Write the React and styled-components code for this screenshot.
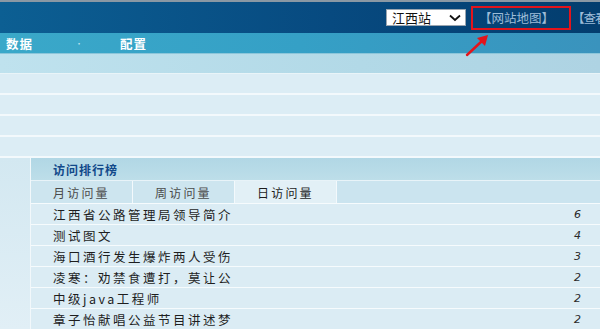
import React, { useState } from "react";
import styled, { createGlobalStyle } from "styled-components";

const GlobalStyle = createGlobalStyle`
  html, body {
    margin: 0;
    padding: 0;
    background: #fff;
  }
  body {
    font-family: "Noto Sans CJK SC", "Noto Sans", sans-serif;
    font-size: 12px;
  }
`;

const Page = styled.div`
  position: relative;
  width: 600px;
  height: 330px;
  overflow: hidden;
  background: #fff;
`;

const TopBar = styled.div`
  height: 31px;
  border-top: 2px solid #8a98a4;
  background: linear-gradient(90deg, #0c5f93 0%, #074a80 55%, #033d6e 100%);
  display: flex;
  align-items: center;
  justify-content: flex-end;
  white-space: nowrap;
  overflow: hidden;
`;

const SiteSelect = styled.div`
  width: 80px;
  height: 17px;
  margin-right: 5px;
  background: #fff;
  border: 1px solid #9aa5b0;
  box-sizing: border-box;
  display: flex;
  align-items: center;
  justify-content: space-between;
  padding: 0 4px 0 5px;
  font-size: 13px;
  color: #111;
  line-height: 1;
`;

const MapLink = styled.a`
  width: 100px;
  height: 24px;
  box-sizing: border-box;
  border: 2px solid #e3141b;
  display: flex;
  align-items: center;
  padding-left: 6px;
  color: #9dbcd8;
  font-size: 12.5px;
  text-decoration: none;
  margin-right: 1px;
`;

const ViewLink = styled.a`
  width: 28px;
  overflow: hidden;
  color: #9dbcd8;
  font-size: 12.5px;
  text-decoration: none;
  letter-spacing: -1px;
`;

const NavBar = styled.div`
  height: 20px;
  background: linear-gradient(90deg, #3aa8c9 0%, #35a0c6 50%, #3a93bd 100%);
  display: flex;
  align-items: center;
  padding-left: 6px;
  border-bottom: 1px solid #8cc6da;
`;

const NavItem = styled.span`
  width: ${(p) => p.w}px;
  color: #fff;
  font-weight: 700;
  font-size: 12.5px;
  letter-spacing: 1px;
`;

const NavDot = styled.span`
  width: 45px;
  color: #bfe3ef;
  font-size: 8px;
`;

const Band = styled.div`
  height: 19px;
  background: linear-gradient(90deg, #bfe2ee 0%, #b2d9e7 60%, #aed3e3 100%);
  border-bottom: 1px solid #e9f4f8;
`;

const BlankRow = styled.div`
  height: 19px;
  background: #dcedf5;
  border-bottom: 2px solid #f3f9fc;
  &:first-of-type {
    height: 21px;
  }
`;

const Main = styled.div`
  display: grid;
  grid-template-columns: 31px 1fr;
`;

const SideCol = styled.div`
  background: linear-gradient(180deg, #d3e8f1 0%, #e1eff6 100%);
  border-right: 1px solid #f2f8fb;
`;

const Panel = styled.div`
  display: flex;
  flex-direction: column;
`;

const PanelHead = styled.div`
  height: 22px;
  background: linear-gradient(180deg, #b1d7e5 0%, #bddee9 100%);
  display: flex;
  align-items: center;
  padding-left: 22px;
  color: #12498a;
  font-weight: 700;
  font-size: 12px;
  letter-spacing: 1px;
  border-bottom: 1px solid #e8f3f8;
`;

const Tabs = styled.div`
  height: 22px;
  display: flex;
  background: #cbe4ef;
`;

const Tab = styled.button`
  all: unset;
  width: 102px;
  height: 22px;
  box-sizing: border-box;
  border-right: 1px solid #f3f9fc;
  background: ${(p) => (p.active ? "#e2f0f6" : "#cde5ef")};
  color: ${(p) => (p.active ? "#1c1c1c" : "#4a4a4a")};
  font-size: 12px;
  letter-spacing: 2.2px;
  padding-left: 22px;
  display: flex;
  align-items: center;
  cursor: pointer;
`;

const Row = styled.div`
  height: 20px;
  background: #dbecf4;
  border-top: 1px solid #f6fbfd;
  display: flex;
  align-items: center;
  justify-content: space-between;
  padding: 0 19px 0 22px;
`;

const Title = styled.span`
  color: #1e1e1e;
  font-size: 12.5px;
  letter-spacing: 2.5px;
`;

const Count = styled.span`
  font-family: "DejaVu Sans", "Liberation Sans", sans-serif;
  font-style: italic;
  font-size: 11px;
  color: #2a2a2a;
`;

const Arrow = styled.svg`
  position: absolute;
  left: 464px;
  top: 33px;
`;

const rows = [
  ["江西省公路管理局领导简介", 6],
  ["测试图文", 4],
  ["海口酒行发生爆炸两人受伤", 3],
  ["凌寒：劝禁食遭打，莫让公", 2],
  ["中级java工程师", 2],
  ["章子怡献唱公益节目讲述梦", 2],
];

const tabs = ["月访问量", "周访问量", "日访问量"];

export default function App() {
  const [active, setActive] = useState(2);
  return (
    <Page>
      <GlobalStyle />
      <TopBar>
        <SiteSelect>
          <span>江西站</span>
          <svg width="12" height="8" viewBox="0 0 12 8">
            <path d="M1 1.5 L6 6 L11 1.5" fill="none" stroke="#111" strokeWidth="1.8" />
          </svg>
        </SiteSelect>
        <MapLink href="#">【网站地图】</MapLink>
        <ViewLink href="#">【查看</ViewLink>
      </TopBar>
      <NavBar>
        <NavItem w={69}>数据</NavItem>
        <NavDot>·</NavDot>
        <NavItem w={60}>配置</NavItem>
      </NavBar>
      <Band />
      <BlankRow />
      <BlankRow />
      <BlankRow />
      <BlankRow />
      <Main>
        <SideCol />
        <Panel>
          <PanelHead>访问排行榜</PanelHead>
          <Tabs>
            {tabs.map((t, i) => (
              <Tab key={t} active={i === active} onClick={() => setActive(i)}>
                {t}
              </Tab>
            ))}
          </Tabs>
          {rows.map(([title, n]) => (
            <Row key={title}>
              <Title>{title}</Title>
              <Count>{n}</Count>
            </Row>
          ))}
        </Panel>
      </Main>
      <Arrow width="28" height="26" viewBox="0 0 28 26">
        <path d="M3 22 L18 8" stroke="#e3141b" strokeWidth="2.4" strokeLinecap="round" />
        <path d="M13 5 L24 2 L21 13 Z" fill="#e3141b" />
      </Arrow>
    </Page>
  );
}
